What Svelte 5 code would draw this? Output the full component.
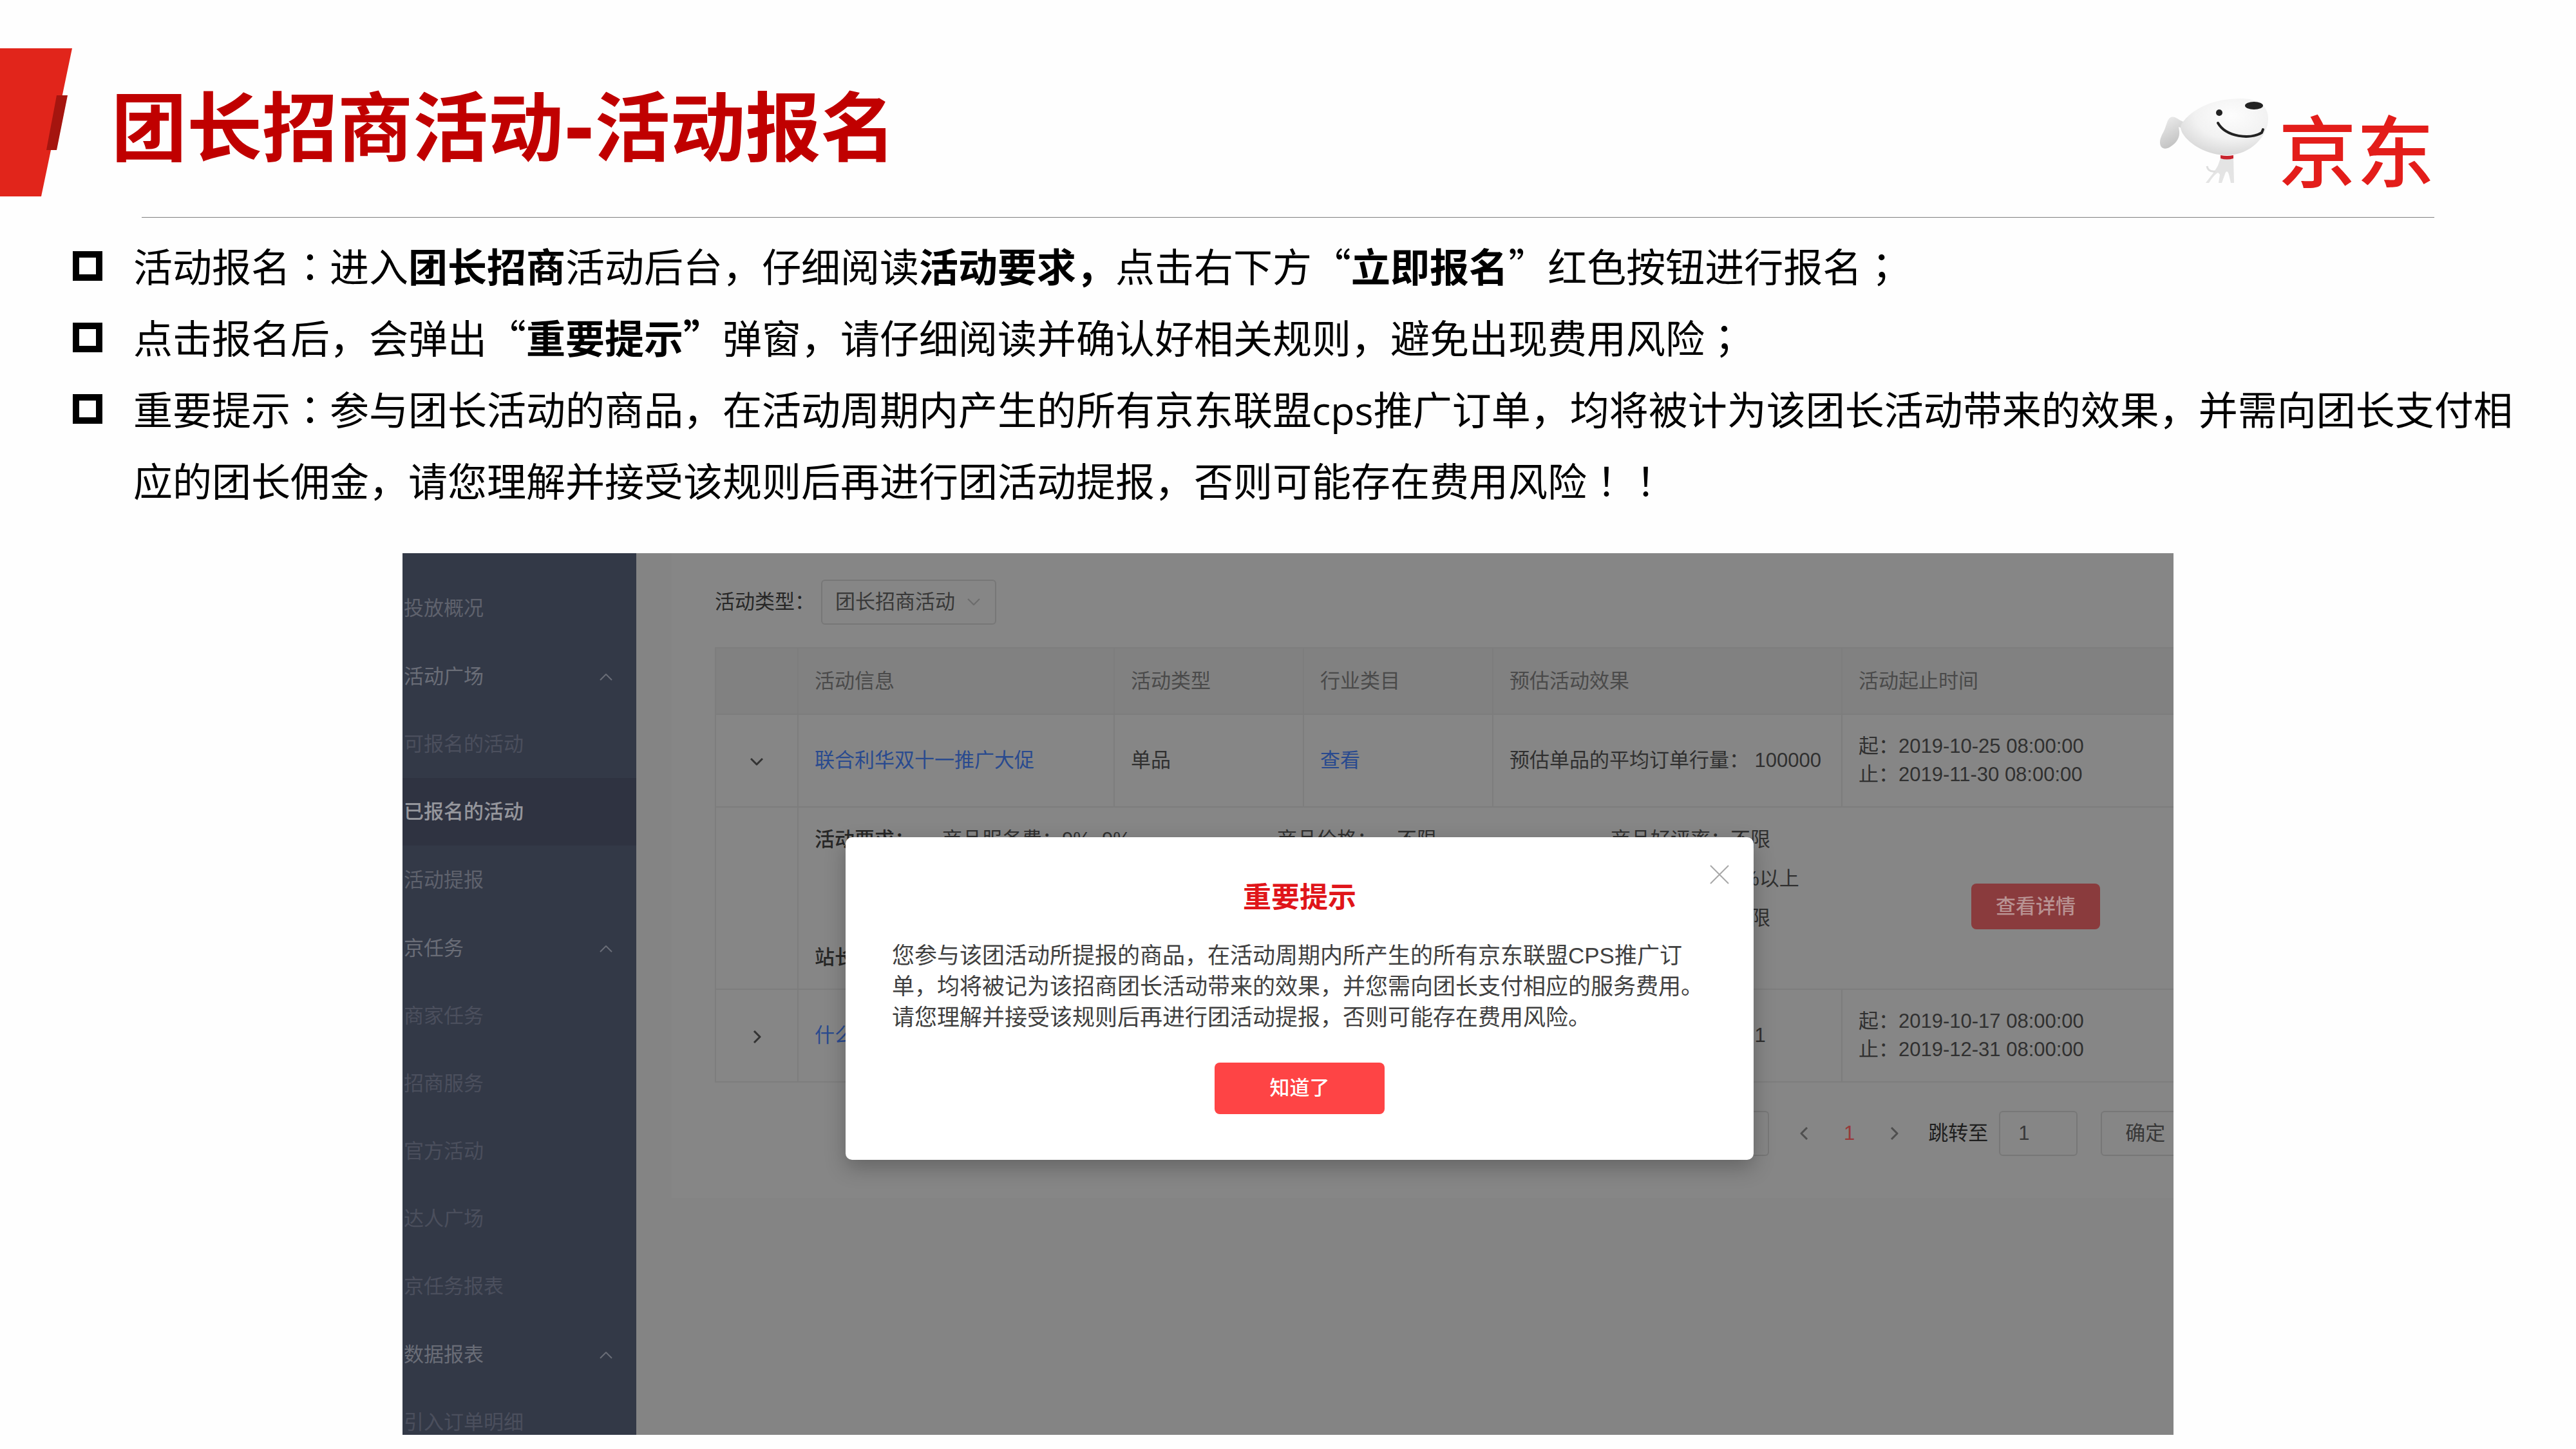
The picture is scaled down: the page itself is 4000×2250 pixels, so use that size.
<script lang="ts">
  type NavItem = { text: string; level: 'top' | 'sub'; open?: boolean; active?: boolean };

  const groups: NavItem[][] = [
    [{ text: '投放概况', level: 'top' }],
    [
      { text: '活动广场', level: 'top', open: true },
      { text: '可报名的活动', level: 'sub' },
      { text: '已报名的活动', level: 'sub', active: true }
    ],
    [{ text: '活动提报', level: 'top' }],
    [
      { text: '京任务', level: 'top', open: true },
      { text: '商家任务', level: 'sub' },
      { text: '招商服务', level: 'sub' },
      { text: '官方活动', level: 'sub' },
      { text: '达人广场', level: 'sub' },
      { text: '京任务报表', level: 'sub' }
    ],
    [
      { text: '数据报表', level: 'top', open: true },
      { text: '引入订单明细', level: 'sub' }
    ]
  ];

  const headers = ['活动信息', '活动类型', '行业类目', '预估活动效果', '活动起止时间'];

  let page = $state('1');
</script>

<div class="slide">
  <header>
    <svg class="flag" viewBox="0 0 112 230" aria-hidden="true">
      <path d="M0 0H112L64 230H0Z" fill="#e1251b" />
      <path d="M88 73H105L88 158H72Z" fill="#a5150f" />
    </svg>
    <h1>团长招商活动<span class="dash">-</span>活动报名</h1>
    <div class="brand">
      <svg class="dog" viewBox="0 0 168 132" aria-hidden="true">
        <defs>
          <radialGradient id="head" cx="0.58" cy="0.3" r="0.75">
            <stop offset="0" stop-color="#fdfdfd" />
            <stop offset="0.55" stop-color="#f2f2f2" />
            <stop offset="1" stop-color="#d4d4d4" />
          </radialGradient>
          <linearGradient id="ear" x1="0" y1="0" x2="0.4" y2="1">
            <stop offset="0" stop-color="#f0f0f0" />
            <stop offset="1" stop-color="#c2c2c2" />
          </linearGradient>
        </defs>
        <path d="M36 36C28 33 24 27 17 29C12 31 11 38 8 46C5 54 0 60 0 68C0 78 8 80 16 75C26 69 31 60 30 51L29 44L36 47Z" fill="url(#ear)" />
        <path d="M95 90L90 104C86 112 78 122 71 131H76C81 123 85 118 90 115L93 118L91 131H96L101 117C103 112 105 112 107 118L110 131H115L114 90Z" fill="#e4e4e4" />
        <path d="M73 105C74 111 78 114 86 113" fill="none" stroke="#dedede" stroke-width="3" />
        <path d="M33 40C50 14 86 0 125 0C152 0 167 10 168 30C169 56 142 88 104 88C74 88 46 72 35 54C32 48 31 44 33 40Z" fill="url(#head)" />
        <path d="M94 88Q104 90 114 88V93Q104 96 94 93Z" fill="#c8232c" />
        <ellipse cx="146" cy="11" rx="14" ry="6" fill="#222" />
        <circle cx="92" cy="22" r="5" fill="#222" />
        <path d="M90 38C103 60 140 64 158 53L160 48" fill="none" stroke="#222" stroke-width="4" stroke-linecap="round" />
      </svg>
      <span class="word">京东</span>
    </div>
  </header>
  <hr />

  <ul class="points">
    <li>
      活动报名<i>：</i>进入<b>团长招商</b>活动后台，仔细阅读<b>活动要求，</b>点击右下方“<b>立即报名</b>”红色按钮进行报名<i>；</i>
    </li>
    <li>
      点击报名后，会弹出“<b>重要提示”</b>弹窗，请仔细阅读并确认好相关规则，避免出现费用风险<i>；</i>
    </li>
    <li>
      重要提示<i>：</i>参与团长活动的商品，在活动周期内产生的所有京东联盟<span class="latin">cps</span>推广订单，均将被计为该团长活动带来的效果，并需向团长支付相应的团长佣金，请您理解并接受该规则后再进行团活动提报，否则可能存在费用风险<i>！！</i>
    </li>
  </ul>

  <div class="screen">
    <nav>
      {#each groups as group}
        <div class="group">
          {#each group as item}
            <a href="#nav" class={item.level} class:active={item.active} class:open={item.open}>
              {item.text}
              {#if item.open}
                <svg class="caret" viewBox="0 0 20 12"><path d="M1 11L10 2L19 11" /></svg>
              {/if}
            </a>
          {/each}
        </div>
      {/each}
    </nav>

    <main>
      <div class="card">
        <div class="filter">
          <label for="kind">活动类型：</label>
          <div class="select">
            <select id="kind"><option>团长招商活动</option></select>
            <svg viewBox="0 0 20 12"><path d="M1 1L10 10L19 1" /></svg>
          </div>
        </div>

        <table>
          <colgroup>
            <col class="c1" /><col class="c2" /><col class="c3" /><col class="c4" /><col class="c5" /><col />
          </colgroup>
          <thead>
            <tr>
              <th></th>
              {#each headers as head}<th>{head}</th>{/each}
            </tr>
          </thead>
          <tbody>
            <tr class="row">
              <td class="toggle">
                <button aria-label="收起"><svg class="down" viewBox="0 0 20 13"><path d="M1 2L10 11L19 2" /></svg></button>
              </td>
              <td><a href="#activity">联合利华双十一推广大促</a></td>
              <td>单品</td>
              <td><a href="#category">查看</a></td>
              <td>预估单品的平均订单行量： 100000</td>
              <td>起：2019-10-25 08:00:00<br />止：2019-11-30 08:00:00</td>
            </tr>
            <tr class="detail">
              <td></td>
              <td colspan="5">
                <div class="detail-body">
                  <div class="rules">
                    <strong>活动要求：</strong>
                    <span class="pair"><span>商品服务费：</span>9%&nbsp; 9%</span>
                    <span class="pair"><span>商品价格：</span>不限</span>
                    <span class="pair"><span>商品好评率：</span>不限</span>
                    <span class="pair last"><span></span>0%以上</span>
                    <span class="pair last"><span></span>不限</span>
                    <strong>站长要求：</strong>
                  </div>
                  <button class="view">查看详情</button>
                </div>
              </td>
            </tr>
            <tr class="row">
              <td class="toggle">
                <button aria-label="展开"><svg class="right" viewBox="0 0 13 20"><path d="M2 1L11 10L2 19" /></svg></button>
              </td>
              <td><a href="#activity">什么</a></td>
              <td></td>
              <td></td>
              <td>预估单品的平均订单行量： 1</td>
              <td>起：2019-10-17 08:00:00<br />止：2019-12-31 08:00:00</td>
            </tr>
          </tbody>
        </table>

        <div class="pager">
          <span class="size"></span>
          <button class="arrow" aria-label="上一页"><svg viewBox="0 0 13 20"><path d="M11 1L2 10L11 19" /></svg></button>
          <span class="current">1</span>
          <button class="arrow" aria-label="下一页"><svg viewBox="0 0 13 20"><path d="M2 1L11 10L2 19" /></svg></button>
          <label for="jump">跳转至</label>
          <input id="jump" bind:value={page} />
          <button class="go">确定</button>
        </div>
      </div>
    </main>

    <div class="modal" role="dialog" aria-labelledby="tip">
      <button class="close" aria-label="关闭"><svg viewBox="0 0 30 30"><path d="M1 1L29 29M29 1L1 29" /></svg></button>
      <h2 id="tip">重要提示</h2>
      <p>
        您参与该团活动所提报的商品，在活动周期内所产生的所有京东联盟CPS推广订<br />单，均将被记为该招商团长活动带来的效果，并您需向团长支付相应的服务费用。<br />请您理解并接受该规则后再进行团活动提报，否则可能存在费用风险。
      </p>
      <button class="ok">知道了</button>
    </div>
  </div>
</div>

<style>
  :global(body) {
    background: #fefefe;
  }

  .slide {
    padding-top: 75px;
    padding-bottom: 22px;
    overflow: hidden;
    font-family: 'Noto Sans CJK SC', sans-serif;
    color: #000;
  }

  header {
    display: flex;
    align-items: flex-start;
    padding: 0 220px 32px 0;
  }

  .flag {
    width: 112px;
    height: 230px;
  }

  h1 {
    margin: 0 auto 0 61px;
    font-size: 117px;
    line-height: 230px;
    font-weight: 700;
    color: #c00000;
  }

  .dash {
    font-family: 'DejaVu Sans', sans-serif;
    line-height: 1;
  }

  .brand {
    display: flex;
    align-items: flex-start;
    gap: 16px;
    padding-top: 78px;
  }

  .dog {
    width: 168px;
    height: 132px;
  }

  .word {
    margin-top: 10px;
    font-size: 121px;
    line-height: 132px;
    font-weight: 500;
    color: #e31d1a;
  }

  hr {
    margin: 0 220px;
    border: 0;
    border-top: 1px solid #7f7f7f;
  }

  .points {
    margin: 0;
    padding: 18px 56px 0 113px;
    list-style: none;
    font-size: 61px;
    line-height: 111px;
  }

  .points li {
    position: relative;
    padding-left: 94px;
  }

  .points li::before {
    content: '';
    position: absolute;
    left: 0;
    top: 34px;
    box-sizing: border-box;
    width: 46px;
    height: 46px;
    border: 10px solid #000;
  }

  .points i {
    font-family: 'Noto Sans CJK JP', sans-serif;
    font-style: normal;
    line-height: 1;
  }

  .points .latin {
    font-family: 'Open Sans', sans-serif;
    line-height: 1;
  }

  .screen {
    position: relative;
    display: flex;
    height: 1369px;
    margin: 59px 625px 0;
    overflow: hidden;
    background: #848484;
    color: #303030;
    font-family: 'Liberation Sans', 'Noto Sans CJK SC', sans-serif;
    font-size: 31px;
    line-height: 44px;
  }

  nav {
    flex: none;
    display: flex;
    flex-direction: column;
    gap: 1px;
    width: 363px;
    padding-top: 33px;
    background: #333947;
  }

  nav a {
    display: flex;
    align-items: center;
    justify-content: space-between;
    height: 105px;
    padding: 0 37px 0 2px;
    text-decoration: none;
    color: #5f626d;
  }

  nav a.open {
    color: #6a6d77;
  }

  nav a.sub {
    color: #4b4f5d;
  }

  nav a.active {
    background: #2f3341;
    color: #95969c;
    font-weight: 500;
  }

  svg path {
    stroke-linejoin: round;
  }

  .caret {
    width: 20px;
    height: 12px;
    fill: none;
    stroke: #6a6d77;
    stroke-width: 2;
  }

  main {
    flex: 1;
    min-width: 0;
    padding-left: 55px;
  }

  .card {
    height: 1001px;
    padding-left: 67px;
    background: #868686;
  }

  .filter {
    display: flex;
    align-items: center;
    padding: 41px 0 35px;
  }

  .filter label {
    width: 165px;
    color: #262626;
  }

  .select {
    display: grid;
    align-items: center;
  }

  .select > * {
    grid-area: 1 / 1;
  }

  .select svg {
    justify-self: end;
    width: 20px;
    height: 12px;
    margin-right: 25px;
    fill: none;
    stroke: #6c6c6c;
    stroke-width: 2;
    pointer-events: none;
  }

  select,
  input,
  .go,
  .size {
    flex: none;
    box-sizing: border-box;
    height: 70px;
    margin: 0;
    border: 2px solid #777;
    border-radius: 6px;
    background: transparent;
    color: #383838;
    font: inherit;
  }

  select {
    appearance: none;
    width: 272px;
    padding: 0 20px;
  }

  table {
    width: 100%;
    table-layout: fixed;
    border-collapse: collapse;
    border-left: 2px solid #7d7d7d;
  }

  .c1 {
    width: 128px;
  }

  .c2 {
    width: 491px;
  }

  .c3,
  .c4 {
    width: 294px;
  }

  .c5 {
    width: 542px;
  }

  th,
  td {
    box-sizing: border-box;
    padding: 0 0 0 25px;
    border: 2px solid #7d7d7d;
    border-right: 0;
    text-align: left;
    font-weight: 400;
    white-space: nowrap;
  }

  th {
    height: 103px;
    background: #818181;
    color: #4a4a4a;
  }

  .row td {
    height: 144px;
  }

  td a {
    color: #294a8f;
    text-decoration: none;
  }

  td.toggle {
    padding: 0;
    text-align: center;
  }

  button {
    margin: 0;
    padding: 0;
    border: 0;
    background: none;
    font: inherit;
    color: inherit;
  }

  .toggle button {
    display: inline-flex;
    vertical-align: middle;
  }

  .toggle svg {
    fill: none;
    stroke: #333;
    stroke-width: 3;
  }

  .down {
    width: 20px;
    height: 13px;
  }

  .right {
    width: 13px;
    height: 20px;
  }

  .detail-body {
    display: flex;
    align-items: center;
    height: 281px;
  }

  .rules {
    display: grid;
    grid-template-columns: 198px 520px 518px 560px;
    line-height: 61px;
  }

  .rules strong {
    grid-column: 1;
    font-weight: 500;
    color: #262626;
  }

  .pair {
    display: flex;
  }

  .pair > span {
    width: 186px;
  }

  .last {
    grid-column: 4;
  }

  .view {
    width: 200px;
    height: 71px;
    margin-top: 26px;
    border-radius: 8px;
    background: #8a3b3d;
    color: #b89292;
    font-weight: 500;
  }

  .pager {
    display: flex;
    align-items: center;
    padding-top: 44px;
  }

  .size {
    width: 220px;
    margin-left: 1417px;
  }

  .arrow {
    flex: none;
    display: flex;
  }

  .arrow svg {
    width: 13px;
    height: 20px;
    fill: none;
    stroke: #4f4f4f;
    stroke-width: 3;
  }

  .size + .arrow {
    margin-left: 48px;
  }

  .current {
    margin: 0 55px;
    color: #973a3a;
  }

  .pager label {
    flex: none;
    margin: 0 17px 0 46px;
    color: #1e1e1e;
  }

  input {
    width: 122px;
    padding: 0 28px;
  }

  .go {
    width: 138px;
    margin-left: 36px;
  }

  .modal {
    position: absolute;
    top: 441px;
    left: 688px;
    box-sizing: border-box;
    display: flex;
    flex-direction: column;
    align-items: center;
    width: 1410px;
    height: 501px;
    padding: 68px 72px 71px;
    border-radius: 10px;
    background: #fff;
    box-shadow: 0 12px 32px rgba(0, 0, 0, 0.25);
  }

  .close {
    position: absolute;
    top: 43px;
    right: 38px;
    display: flex;
  }

  .close svg {
    width: 30px;
    height: 30px;
    stroke: #a8a8a8;
    stroke-width: 2;
  }

  h2 {
    margin: 0;
    font-size: 44px;
    line-height: 52px;
    font-weight: 700;
    color: #e0151a;
  }

  .modal p {
    align-self: stretch;
    margin: 40px 0 0;
    font-size: 35px;
    line-height: 48px;
    color: #404040;
    white-space: nowrap;
  }

  .ok {
    width: 264px;
    height: 80px;
    margin-top: auto;
    border-radius: 8px;
    background: #fe4445;
    color: #fff;
    font-weight: 500;
  }
</style>
